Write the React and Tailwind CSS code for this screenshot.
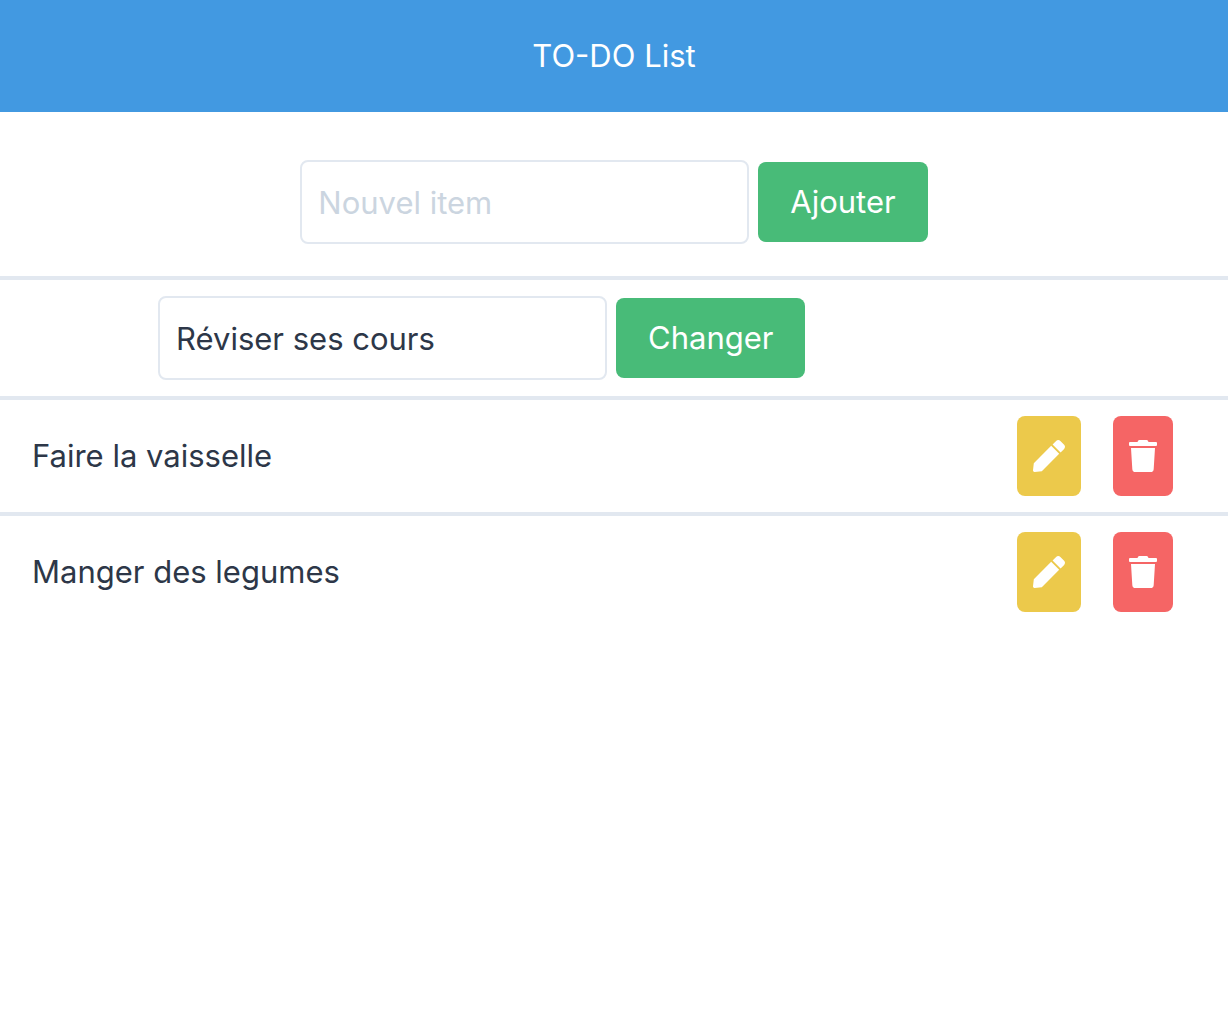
import { FaPen, FaTrash } from "react-icons/fa";

const items = ["Faire la vaisselle", "Manger des legumes"];

function Field({ label, ...props }) {
  return (
    <input
      type="text"
      aria-label={label}
      className="h-[84px] w-[449px] rounded-lg border-2 border-[#e2e8f0] bg-white px-4 placeholder:text-[#cbd5e0]"
      {...props}
    />
  );
}

function SubmitButton({ children }) {
  return (
    <button type="button" className="rounded-lg bg-[#48bb78] px-8 py-4 text-white">
      {children}
    </button>
  );
}

function TodoItem({ text }) {
  return (
    <li className="flex items-center justify-between border-t-4 border-[#e2e8f0] py-4 pr-[55px] pl-8">
      <span>{text}</span>
      <div className="flex gap-8">
        <button type="button" aria-label="Modifier" className="h-20 rounded-lg bg-[#ecc94b] px-4 text-white">
          <FaPen className="size-8" />
        </button>
        <button type="button" aria-label="Supprimer" className="h-20 rounded-lg bg-[#f56565] px-4 text-white">
          <FaTrash className="h-8 w-7" />
        </button>
      </div>
    </li>
  );
}

export default function App() {
  return (
    <div className="min-h-screen bg-white font-['Inter',sans-serif] text-[31px] leading-[48px] text-[#2d3748]">
      <header className="bg-[#4299e1] py-8 text-center text-white">
        <h1>TO-DO List</h1>
      </header>
      <form className="flex items-center justify-center gap-[9px] pt-12 pb-8">
        <Field label="Nouvel item" placeholder="Nouvel item" />
        <SubmitButton>Ajouter</SubmitButton>
      </form>
      <ul>
        <li className="flex items-center gap-[9px] border-t-4 border-[#e2e8f0] py-4 pl-[158px]">
          <Field label="Modifier l'item" defaultValue="Réviser ses cours" />
          <SubmitButton>Changer</SubmitButton>
        </li>
        {items.map((text) => (
          <TodoItem key={text} text={text} />
        ))}
      </ul>
    </div>
  );
}
